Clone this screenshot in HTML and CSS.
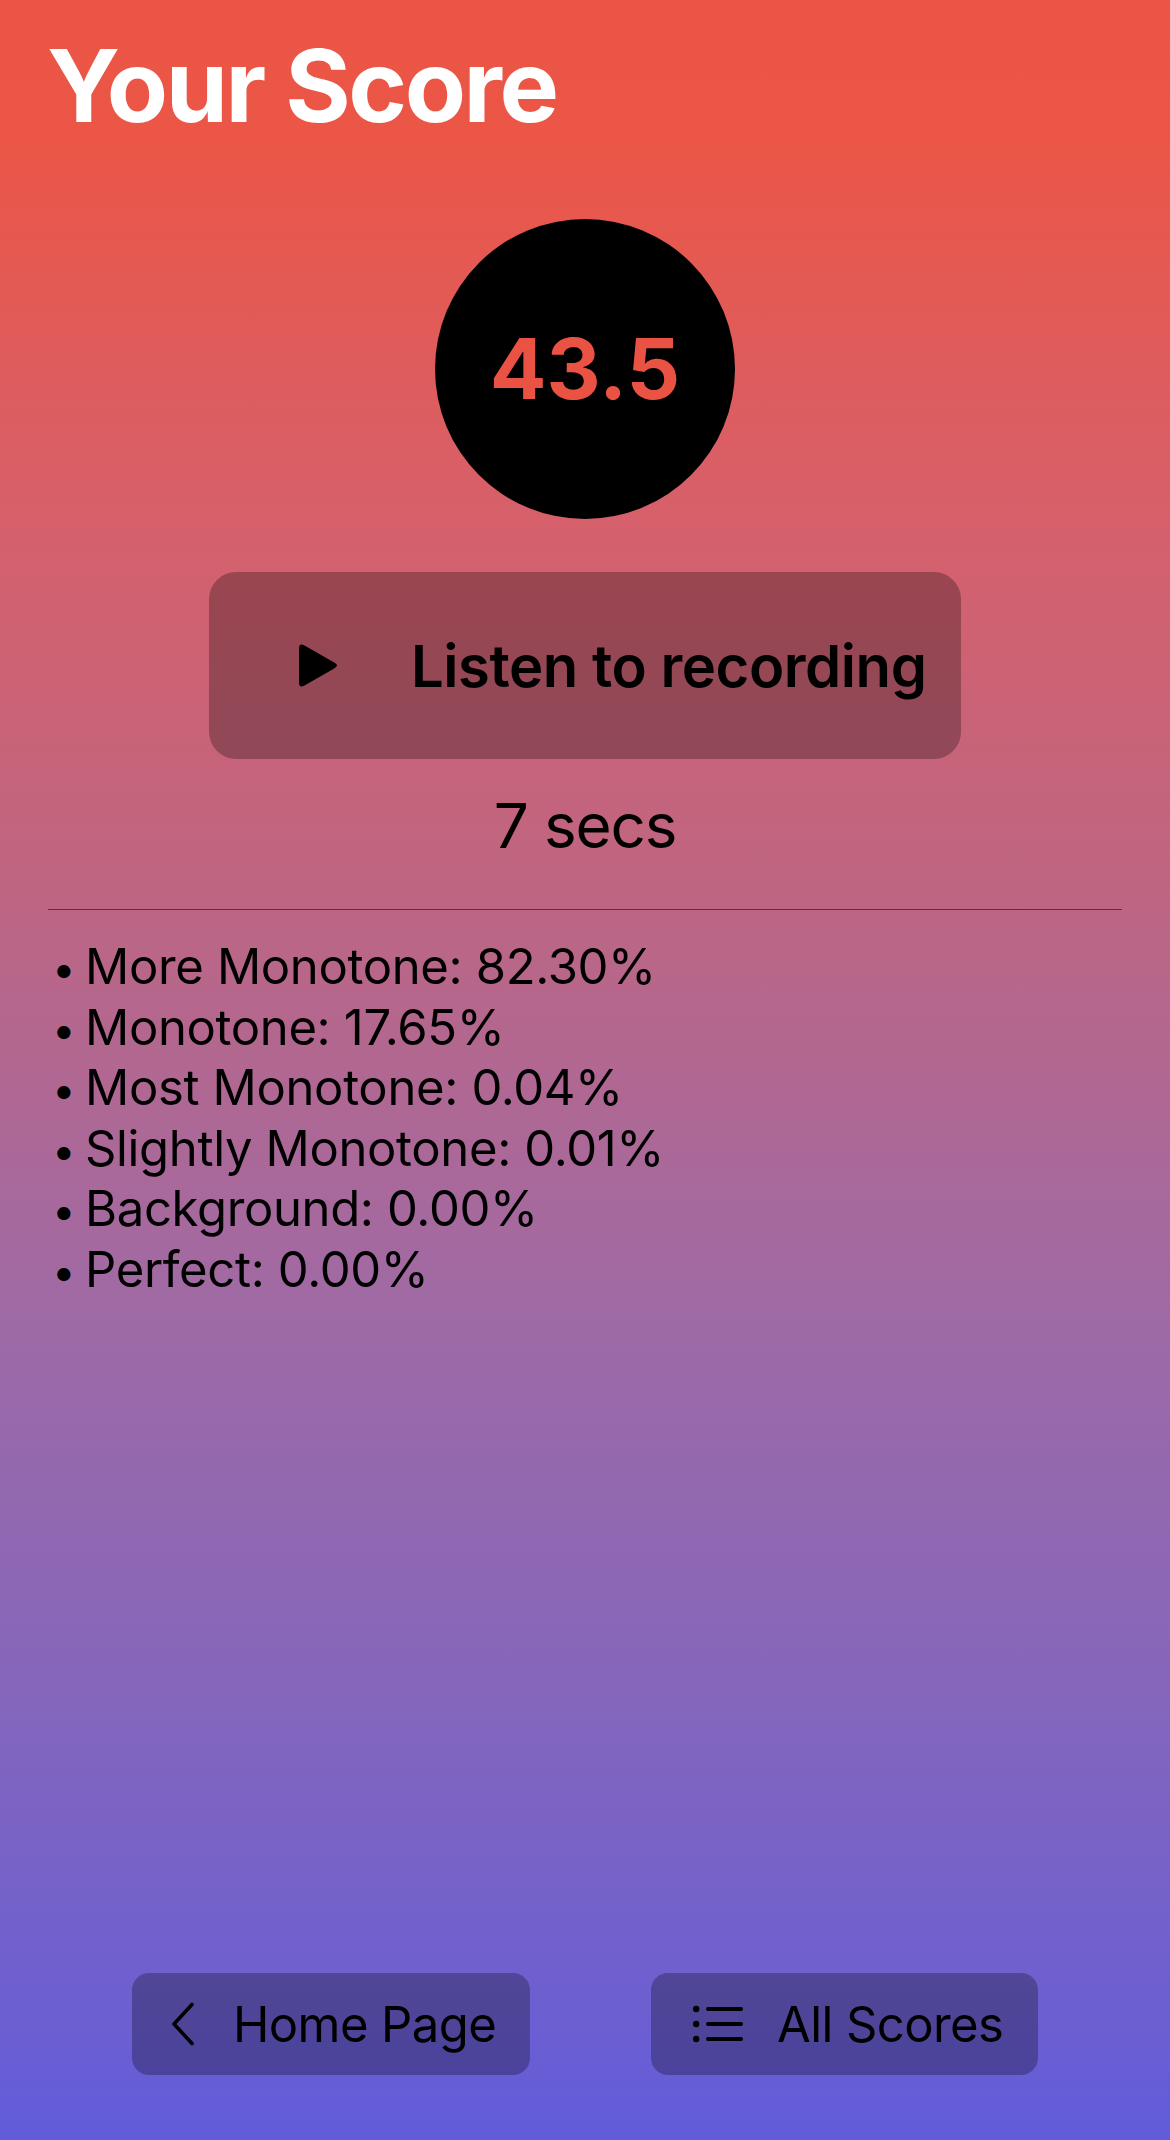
FILE: index.html
```html
<!DOCTYPE html>
<html lang="en">
<head>
<meta charset="utf-8">
<title>Your Score</title>
<link rel="stylesheet" href="styles.css">
</head>
<body>
<main class="screen">
  <h1 class="title">Your Score</h1>

  <div class="score-circle"><span class="score-value">43.5</span></div>

  <button class="listen" type="button">
    <svg class="play-icon" width="38" height="43" viewBox="0 0 38 43" aria-hidden="true">
      <path d="M5.5 1.6 L35.2 18.6 Q38 20.2 38 21.5 Q38 22.8 35.2 24.4 L5.5 41.4 Q0 44.5 0 38.2 V4.8 Q0 -1.5 5.5 1.6 Z" fill="#000"/>
    </svg>
    <span class="listen-label">Listen to recording</span>
  </button>

  <div class="duration">7 secs</div>

  <hr class="divider">

  <ul class="breakdown">
    <li><span class="bullet">•</span><span>More Monotone: 82.30%</span></li>
    <li><span class="bullet">•</span><span>Monotone: 17.65%</span></li>
    <li><span class="bullet">•</span><span>Most Monotone: 0.04%</span></li>
    <li><span class="bullet">•</span><span>Slightly Monotone: 0.01%</span></li>
    <li><span class="bullet">•</span><span>Background: 0.00%</span></li>
    <li><span class="bullet">•</span><span>Perfect: 0.00%</span></li>
  </ul>

  <nav class="bottom-bar">
    <button class="nav-btn nav-home" type="button">
      <svg class="nav-icon chevron" width="24" height="44" viewBox="0 0 24 44" aria-hidden="true">
        <polyline points="21,2.5 3,22 21,41.5" fill="none" stroke="#000" stroke-width="3.6" stroke-linecap="round" stroke-linejoin="round"/>
      </svg>
      <span>Home Page</span>
    </button>
    <button class="nav-btn nav-all" type="button">
      <svg class="nav-icon list" width="50" height="40" viewBox="0 0 50 40" aria-hidden="true">
        <circle cx="3.2" cy="5" r="3.2" fill="#000"/>
        <circle cx="3.2" cy="20" r="3.2" fill="#000"/>
        <circle cx="3.2" cy="35" r="3.2" fill="#000"/>
        <line x1="15" y1="5" x2="48" y2="5" stroke="#000" stroke-width="4" stroke-linecap="round"/>
        <line x1="15" y1="20" x2="48" y2="20" stroke="#000" stroke-width="4" stroke-linecap="round"/>
        <line x1="15" y1="35" x2="48" y2="35" stroke="#000" stroke-width="4" stroke-linecap="round"/>
      </svg>
      <span>All Scores</span>
    </button>
  </nav>
</main>
</body>
</html>
```

FILE: styles.css
```css
html, body {
  margin: 0;
  padding: 0;
}

body {
  font-family: Inter, "Noto Sans", "Liberation Sans", sans-serif;
  color: #000;
}

.screen {
  box-sizing: border-box;
  width: 1170px;
  height: 2140px;
  padding: 0 48px 65px;
  display: flex;
  flex-direction: column;
  background: linear-gradient(180deg,
    #ec5546 0px,
    #eb5647 150px,
    #d6606b 520px,
    #c06580 860px,
    #a06aa4 1300px,
    #8466bc 1700px,
    #625cda 2140px);
}

.title {
  margin: 36px 0 0 -1px;
  font-size: 100px;
  line-height: 100px;
  font-weight: 700;
  color: #fff;
  letter-spacing: -2.4px;
}

.score-circle {
  align-self: center;
  width: 300px;
  height: 300px;
  margin-top: 83px;
  border-radius: 50%;
  background: #000;
  display: flex;
  align-items: center;
  justify-content: center;
}

.score-value {
  font-size: 84px;
  line-height: 1;
  font-weight: 700;
  color: #ea5244;
}

.listen {
  align-self: center;
  box-sizing: border-box;
  width: 752px;
  height: 187px;
  margin-top: 53px;
  padding: 0 37px 0 90px;
  border: none;
  border-radius: 27px;
  background: rgba(0, 0, 0, 0.27);
  display: flex;
  align-items: center;
  gap: 74px;
  font-family: inherit;
  color: #000;
}

.play-icon {
  flex: none;
}

.listen-label {
  font-size: 58px;
  line-height: 1;
  font-weight: 600;
  letter-spacing: -0.45px;
  white-space: nowrap;
}

.duration {
  margin-top: 36px;
  text-align: center;
  font-size: 62px;
  line-height: 62px;
  letter-spacing: -1.2px;
}

.divider {
  margin: 52px 0 0;
  border: 0;
  height: 1px;
  background: rgba(40, 40, 45, 0.75);
}

.breakdown {
  list-style: none;
  margin: 27px 0 0;
  padding: 0;
  font-size: 49px;
  line-height: 60.5px;
  letter-spacing: -0.35px;
}

.breakdown li {
  display: flex;
  align-items: baseline;
  height: 60.5px;
}

.bullet {
  flex: none;
  width: 37px;
  padding-left: 4px;
  box-sizing: border-box;
  font-size: 42px;
  line-height: 1;
}

.bottom-bar {
  margin-top: auto;
  display: flex;
  justify-content: center;
  gap: 121px;
}

.nav-btn {
  box-sizing: border-box;
  height: 102px;
  border: none;
  border-radius: 17px;
  background: rgba(0, 0, 0, 0.27);
  display: flex;
  align-items: center;
  font-family: inherit;
  font-size: 49px;
  line-height: 1;
  letter-spacing: -0.6px;
  color: #000;
  white-space: nowrap;
}

.nav-home {
  width: 398px;
  padding: 0 0 0 39px;
  gap: 38px;
}

.nav-all {
  width: 387px;
  padding: 0 0 0 42px;
  gap: 34px;
}

.nav-icon {
  flex: none;
}
```
